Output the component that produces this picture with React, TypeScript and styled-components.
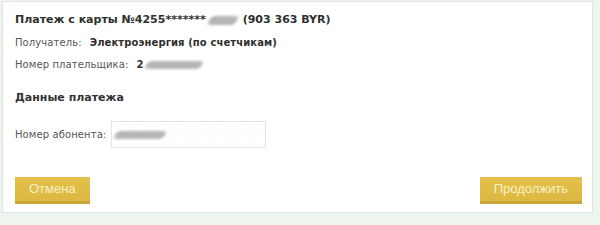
import React from 'react';
import styled, { createGlobalStyle } from 'styled-components';

const GlobalStyle = createGlobalStyle`
    html, body {
        margin: 0;
        padding: 0;
        background-color: #eef4ee;
        font-family: "DejaVu Sans", Verdana, sans-serif;
    }
`;

const Page = styled.div`
    width: 600px;
    height: 225px;
    box-sizing: border-box;
    padding: 1px 7px 0 2px;
`;

const Panel = styled.div`
    box-sizing: border-box;
    width: 591px;
    height: 212px;
    background: #fff;
    border: 1px solid #dfe5df;
    padding: 10px 10px 8px 12px;
    display: flex;
    flex-direction: column;
`;

const Title = styled.div`
    font-size: 11px;
    font-weight: bold;
    line-height: 16px;
    color: #2f2f2f;
    display: flex;
    align-items: center;
    white-space: nowrap;
`;

const Row = styled.div<{ $top: number }>`
    margin-top: ${p => p.$top}px;
    display: flex;
    align-items: center;
    line-height: 16px;
    font-size: 10px;
    white-space: nowrap;
`;

const Label = styled.span`
    color: #555;
    margin-right: 8px;
    letter-spacing: 0.1px;
`;

const Value = styled.span`
    color: #2f2f2f;
    font-weight: bold;
    letter-spacing: 0.1px;
`;

const Section = styled.div`
    margin-top: 17px;
    font-size: 11px;
    font-weight: bold;
    line-height: 16px;
    color: #333;
`;

const Smudge = styled.span<{ $w: number; $h: number }>`
    display: inline-block;
    width: ${p => p.$w}px;
    height: ${p => p.$h}px;
    background: #b3b6b3;
    border-radius: 4px;
    filter: blur(1.5px);
    transform: skewX(-25deg);
`;

const FieldRow = styled.div`
    margin-top: 15px;
    display: flex;
    align-items: center;
    font-size: 10px;
    letter-spacing: 0.1px;
    color: #555;
`;

const Input = styled.div`
    box-sizing: border-box;
    width: 155px;
    height: 27px;
    margin-left: 5px;
    border: 1px solid #e2e6e2;
    background-color: #fff;
    background-image: radial-gradient(#eef0ee 0.8px, transparent 1px);
    background-size: 5px 5px;
    display: flex;
    align-items: center;
    padding-left: 3px;
`;

const Buttons = styled.div`
    margin-top: auto;
    display: flex;
    justify-content: space-between;
`;

const Button = styled.button`
    height: 27px;
    padding: 0 14px 2px;
    border: none;
    border-bottom: 3px solid #c9a53a;
    background: linear-gradient(#e3c14a, #dcb843);
    color: #f8f0c4;
    font-family: "Liberation Sans", Arial, sans-serif;
    font-size: 13px;
    cursor: pointer;
`;

const App: React.FC = () => {
    return (
        <Page>
            <GlobalStyle/>
            <Panel>
                <Title>
                    Платеж с карты №4255*******
                    <Smudge $w={28} $h={9} style={{ margin: '0 6px 0 3px' }}/>
                    (903 363 BYR)
                </Title>
                <Row $top={7}>
                    <Label>Получатель:</Label>
                    <Value>Электроэнергия (по счетчикам)</Value>
                </Row>
                <Row $top={6}>
                    <Label>Номер плательщика:</Label>
                    <Value>2</Value>
                    <Smudge $w={56} $h={8} style={{ marginLeft: 2 }}/>
                </Row>
                <Section>Данные платежа</Section>
                <FieldRow>
                    Номер абонента:
                    <Input>
                        <Smudge $w={50} $h={8}/>
                    </Input>
                </FieldRow>
                <Buttons>
                    <Button>Отмена</Button>
                    <Button>Продолжить</Button>
                </Buttons>
            </Panel>
        </Page>
    );
}

export default App;
